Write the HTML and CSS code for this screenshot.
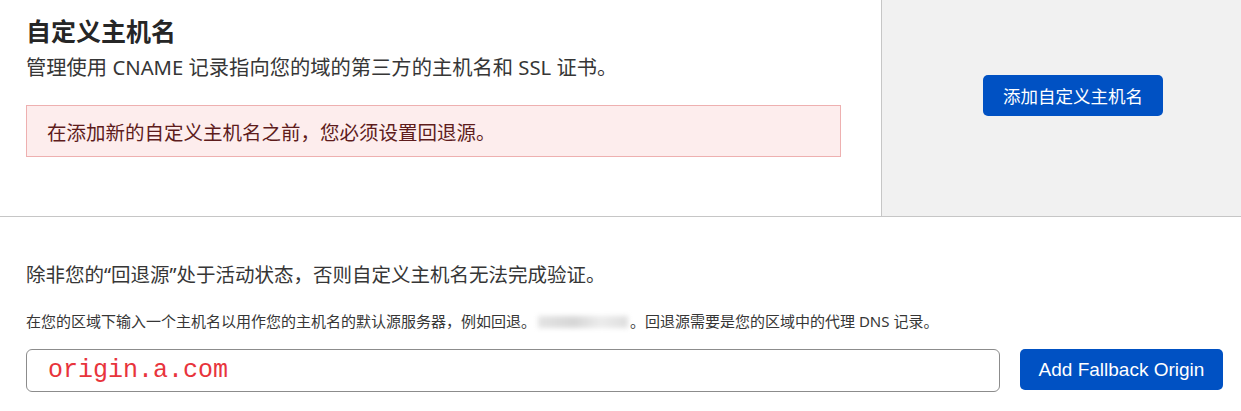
FILE: index.html
```html
<!DOCTYPE html>
<html lang="zh-CN">
<head>
<meta charset="utf-8">
<title>自定义主机名</title>
<link rel="stylesheet" href="styles.css">
</head>
<body>
<section class="top">
  <div class="intro">
    <h1 class="title">自定义主机名</h1>
    <p class="subtitle">管理使用 CNAME 记录指向您的域的第三方的主机名和 SSL 证书。</p>
    <div class="alert">在添加新的自定义主机名之前，您必须设置回退源。</div>
  </div>
  <div class="side">
    <button class="btn btn-add">添加自定义主机名</button>
  </div>
</section>
<section class="fallback">
  <p class="lead">除非您的“回退源”处于活动状态，否则自定义主机名无法完成验证。</p>
  <p class="hint">在您的区域下输入一个主机名以用作您的主机名的默认源服务器，例如回退。<span class="redacted"></span>。回退源需要是您的区域中的代理 DNS 记录。</p>
  <div class="form-row">
    <div class="input">origin.a.com</div>
    <button class="btn btn-fallback">Add Fallback Origin</button>
  </div>
</section>
</body>
</html>
```

FILE: styles.css
```css
* { box-sizing: border-box; }
html, body {
  margin: 0;
  padding: 0;
  background: #ffffff;
}
body {
  width: 1241px;
  font-family: "Noto Sans", "Noto Sans CJK SC", sans-serif;
  color: #333333;
}
.top {
  display: flex;
  height: 217px;
  border-bottom: 1px solid #c6c6c6;
}
.intro {
  flex: 0 0 882px;
  border-right: 1px solid #c6c6c6;
  padding: 13px 40px 0 26px;
}
.title {
  margin: 0;
  font-size: 25px;
  line-height: 36px;
  font-weight: 700;
  color: #262626;
}
.subtitle {
  margin: 4px 0 0;
  font-size: 20.3px;
  line-height: 28px;
  color: #363636;
}
.alert {
  margin-top: 24px;
  width: 815px;
  height: 52px;
  padding: 0 20px;
  display: flex;
  align-items: center;
  background: #fdeded;
  border: 1px solid #eeb0b0;
  font-size: 19.5px;
  color: #5e1c1c;
}
.side {
  flex: 1;
  background: #f1f1f1;
  padding: 75px 0 0 101px;
}
.btn {
  border: 0;
  background: #0051c3;
  color: #ffffff;
  border-radius: 5px;
  cursor: pointer;
  padding: 0;
}
.btn-add {
  width: 180px;
  height: 41px;
  font-family: "Noto Sans CJK SC", sans-serif;
  font-size: 17.5px;
}
.fallback {
  padding: 0 0 0 26px;
}
.lead {
  margin: 44px 0 0;
  font-size: 19.5px;
  line-height: 28px;
  color: #363636;
}
.hint {
  margin: 22px 0 0;
  font-size: 15px;
  line-height: 20px;
  color: #363636;
}
.redacted {
  display: inline-block;
  width: 90px;
  height: 12px;
  margin: 0 2px;
  vertical-align: -1px;
  background: linear-gradient(90deg, #e4e4e4, #d6d6d6 40%, #ececec 70%, #dedede);
  filter: blur(2.5px);
}
.form-row {
  display: flex;
  align-items: flex-start;
  gap: 20px;
  margin-top: 18px;
}
.input {
  flex: 0 0 974px;
  height: 43px;
  border: 1px solid #8c8c8c;
  border-radius: 6px;
  padding: 0 21px;
  display: flex;
  align-items: center;
  font-family: "Liberation Mono", "DejaVu Sans Mono", monospace;
  font-size: 25px;
  color: #e8343c;
}
.btn-fallback {
  width: 203px;
  height: 41px;
  font-family: "Liberation Sans", Arial, sans-serif;
  font-size: 19px;
}
```
